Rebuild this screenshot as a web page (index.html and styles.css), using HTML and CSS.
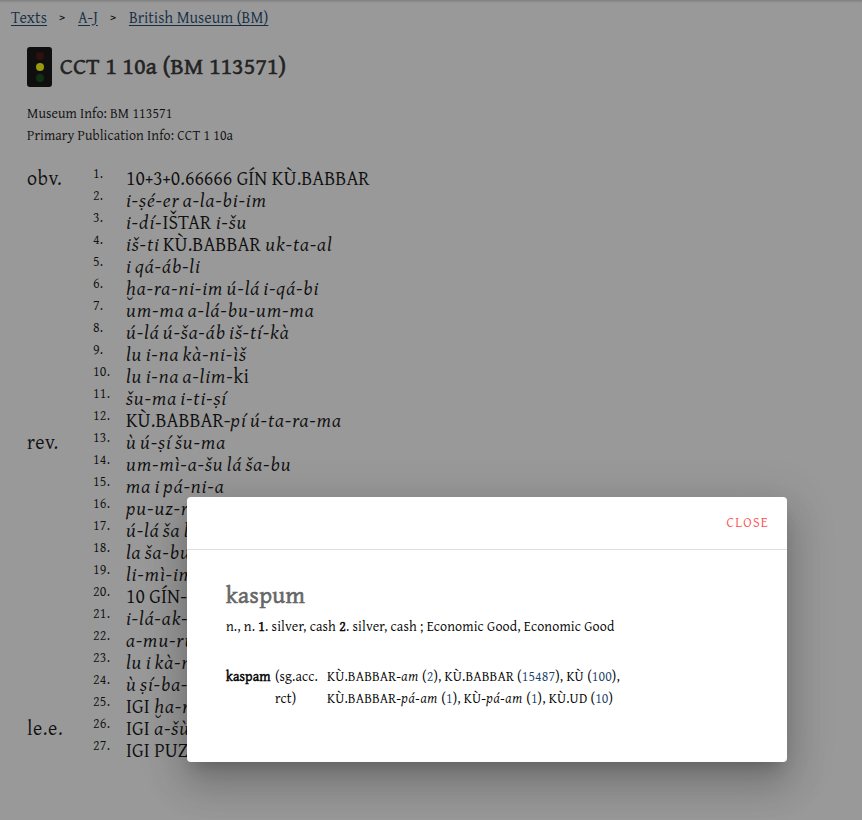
FILE: index.html
```html
<!DOCTYPE html>
<html lang="en">
<head>
<meta charset="utf-8">
<title>CCT 1 10a (BM 113571)</title>
<link rel="stylesheet" href="styles.css">
</head>
<body>
<main class="page">
  <nav class="crumbs"><a href="#" class="first">Texts</a><span>&gt;</span><a href="#">A-J</a><span>&gt;</span><a href="#">British Museum (BM)</a></nav>
  <header class="title">
    <svg class="light" width="25" height="40" viewBox="0 0 25 40"><rect width="25" height="40" rx="3" fill="#000"/><circle cx="13" cy="9" r="4" fill="#3d0000"/><circle cx="13" cy="20" r="4" fill="#ff0"/><circle cx="13" cy="31" r="4" fill="#003d0a"/></svg>
    <h1>CCT 1 10a (BM 113571)</h1>
  </header>
  <div class="info"><p>Museum Info: BM 113571</p><p>Primary Publication Info: CCT 1 10a</p></div>
  <section class="text">
    <div class="row"><b>obv.</b><sup>1.</sup><p>10+3+0.66666 GÍN KÙ.BABBAR</p></div>
    <div class="row"><b></b><sup>2.</sup><p><i>i-ṣé-er a-la-bi-im</i></p></div>
    <div class="row"><b></b><sup>3.</sup><p><i>i-dí-</i>IŠTAR <i>i-šu</i></p></div>
    <div class="row"><b></b><sup>4.</sup><p><i>iš-ti </i>KÙ.BABBAR <i>uk-ta-al</i></p></div>
    <div class="row"><b></b><sup>5.</sup><p><i>i qá-áb-li</i></p></div>
    <div class="row"><b></b><sup>6.</sup><p><i>ḫa-ra-ni-im ú-lá i-qá-bi</i></p></div>
    <div class="row"><b></b><sup>7.</sup><p><i>um-ma a-lá-bu-um-ma</i></p></div>
    <div class="row"><b></b><sup>8.</sup><p><i>ú-lá ú-ša-áb iš-tí-kà</i></p></div>
    <div class="row"><b></b><sup>9.</sup><p><i>lu i-na kà-ni-ìš</i></p></div>
    <div class="row"><b></b><sup>10.</sup><p><i>lu i-na a-lim-</i>ki</p></div>
    <div class="row"><b></b><sup>11.</sup><p><i>šu-ma i-ti-ṣí</i></p></div>
    <div class="row"><b></b><sup>12.</sup><p>KÙ.BABBAR-<i>pí ú-ta-ra-ma</i></p></div>
    <div class="row"><b>rev.</b><sup>13.</sup><p><i>ù ú-ṣí šu-ma</i></p></div>
    <div class="row"><b></b><sup>14.</sup><p><i>um-mì-a-šu lá ša-bu</i></p></div>
    <div class="row"><b></b><sup>15.</sup><p><i>ma i pá-ni-a</i></p></div>
    <div class="row"><b></b><sup>16.</sup><p><i>pu-uz-ri</i></p></div>
    <div class="row"><b></b><sup>17.</sup><p><i>ú-lá ša li</i></p></div>
    <div class="row"><b></b><sup>18.</sup><p><i>la ša-bu</i></p></div>
    <div class="row"><b></b><sup>19.</sup><p><i>li-mì-im</i></p></div>
    <div class="row"><b></b><sup>20.</sup><p>10 GÍN-</p></div>
    <div class="row"><b></b><sup>21.</sup><p><i>i-lá-ak-</i></p></div>
    <div class="row"><b></b><sup>22.</sup><p><i>a-mu-ru</i></p></div>
    <div class="row"><b></b><sup>23.</sup><p><i>lu i kà-ni</i></p></div>
    <div class="row"><b></b><sup>24.</sup><p><i>ù ṣí-ba-</i></p></div>
    <div class="row"><b></b><sup>25.</sup><p>IGI <i>ḫa-ra</i></p></div>
    <div class="row"><b>le.e.</b><sup>26.</sup><p>IGI <i>a-šùr</i></p></div>
    <div class="row"><b></b><sup>27.</sup><p>IGI PUZUR,</p></div>
  </section>
</main>
<div class="overlay"></div>
<div class="dialog">
  <div class="bar"><button>CLOSE</button></div>
  <div class="content">
    <h2>kaspum</h2>
    <p class="def">n., n. <strong>1</strong>. silver, cash <strong>2</strong>. silver, cash ; Economic Good, Economic Good</p>
    <div class="forms">
      <strong>kaspam</strong>
      <span class="gram">(sg.acc.<br>rct)</span>
      <div class="spell"><p>KÙ.BABBAR-<i>am</i> (<a>2</a>), KÙ.BABBAR (<a>15487</a>), KÙ (<a>100</a>),</p><p>KÙ.BABBAR-<i>pá-am</i> (<a>1</a>), KÙ-<i>pá-am</i> (<a>1</a>), KÙ.UD (<a>10</a>)</p></div>
    </div>
  </div>
</div>
</body>
</html>
```
FILE: styles.css
```css
* { box-sizing: border-box; }
body { margin: 0; height: 820px; overflow: hidden; background: #fff; color: #000; font: 14px/22px "Gentium Basic", "Gentium Book Basic", "Gentium Plus", Gentium, "Liberation Serif", serif; }
p, h1, h2 { margin: 0; }
i { letter-spacing: .046em; word-spacing: -.09em; }
h1, h2, strong { font-weight: 400; -webkit-text-stroke: .5px currentColor; }
.page { height: 820px; box-shadow: inset 0 3px 3px -2px rgba(0,0,0,.25); }
.crumbs { display: flex; height: 34px; padding-left: 11px; align-items: center; font-size: 16px; }
.crumbs a { color: #0a3a66; text-underline-offset: 2px; }
.crumbs .first { letter-spacing: .2px; }
.crumbs span { margin: 0 12px; width: 7px; font-size: 14px; }
.title { display: flex; align-items: center; height: 40px; margin: 13px 0 0 27px; }
.title h1 { margin: -2px 0 0 8px; font-size: 24px; letter-spacing: .3px; -webkit-text-stroke-width: .7px; color: #252525; }
.info { margin: 15px 0 0 27px; letter-spacing: .09px; }
.text { margin: 21px 0 0 27px; }
.row { display: grid; grid-template-columns: 66px 33px 1fr; height: 22px; font-size: 20px; line-height: 22px; white-space: nowrap; letter-spacing: .06px; }
.row b { font-weight: 400; letter-spacing: .6px; }
.row sup { font-size: 14px; line-height: 12px; vertical-align: baseline; letter-spacing: .3px; }
.overlay { position: absolute; inset: 0; background: rgba(33,33,33,.46); }
.dialog { position: absolute; left: 187px; top: 497px; width: 600px; height: 265px; background: #fff; border-radius: 4px; box-shadow: 0 11px 15px -7px rgba(0,0,0,.2), 0 24px 38px 3px rgba(0,0,0,.14), 0 9px 46px 8px rgba(0,0,0,.12); }
.bar { display: flex; justify-content: flex-end; align-items: center; height: 53px; padding: 0 18px 2px 0; border-bottom: 1px solid #e0e0e0; }
.bar button { padding: 0; border: 0; background: none; color: #ff5252; font: inherit; letter-spacing: 1.25px; }
.content { padding: 29px 39px; }
h2 { font-size: 24px; line-height: 32px; letter-spacing: .4px; color: #666; -webkit-text-stroke-width: .7px; }
.def { margin-top: 4px; letter-spacing: .15px; }
.forms { display: grid; grid-template-columns: 49px 52px 1fr; margin-top: 28px; white-space: nowrap; letter-spacing: .14px; }
.forms a { color: #1a3f6b; }
```
